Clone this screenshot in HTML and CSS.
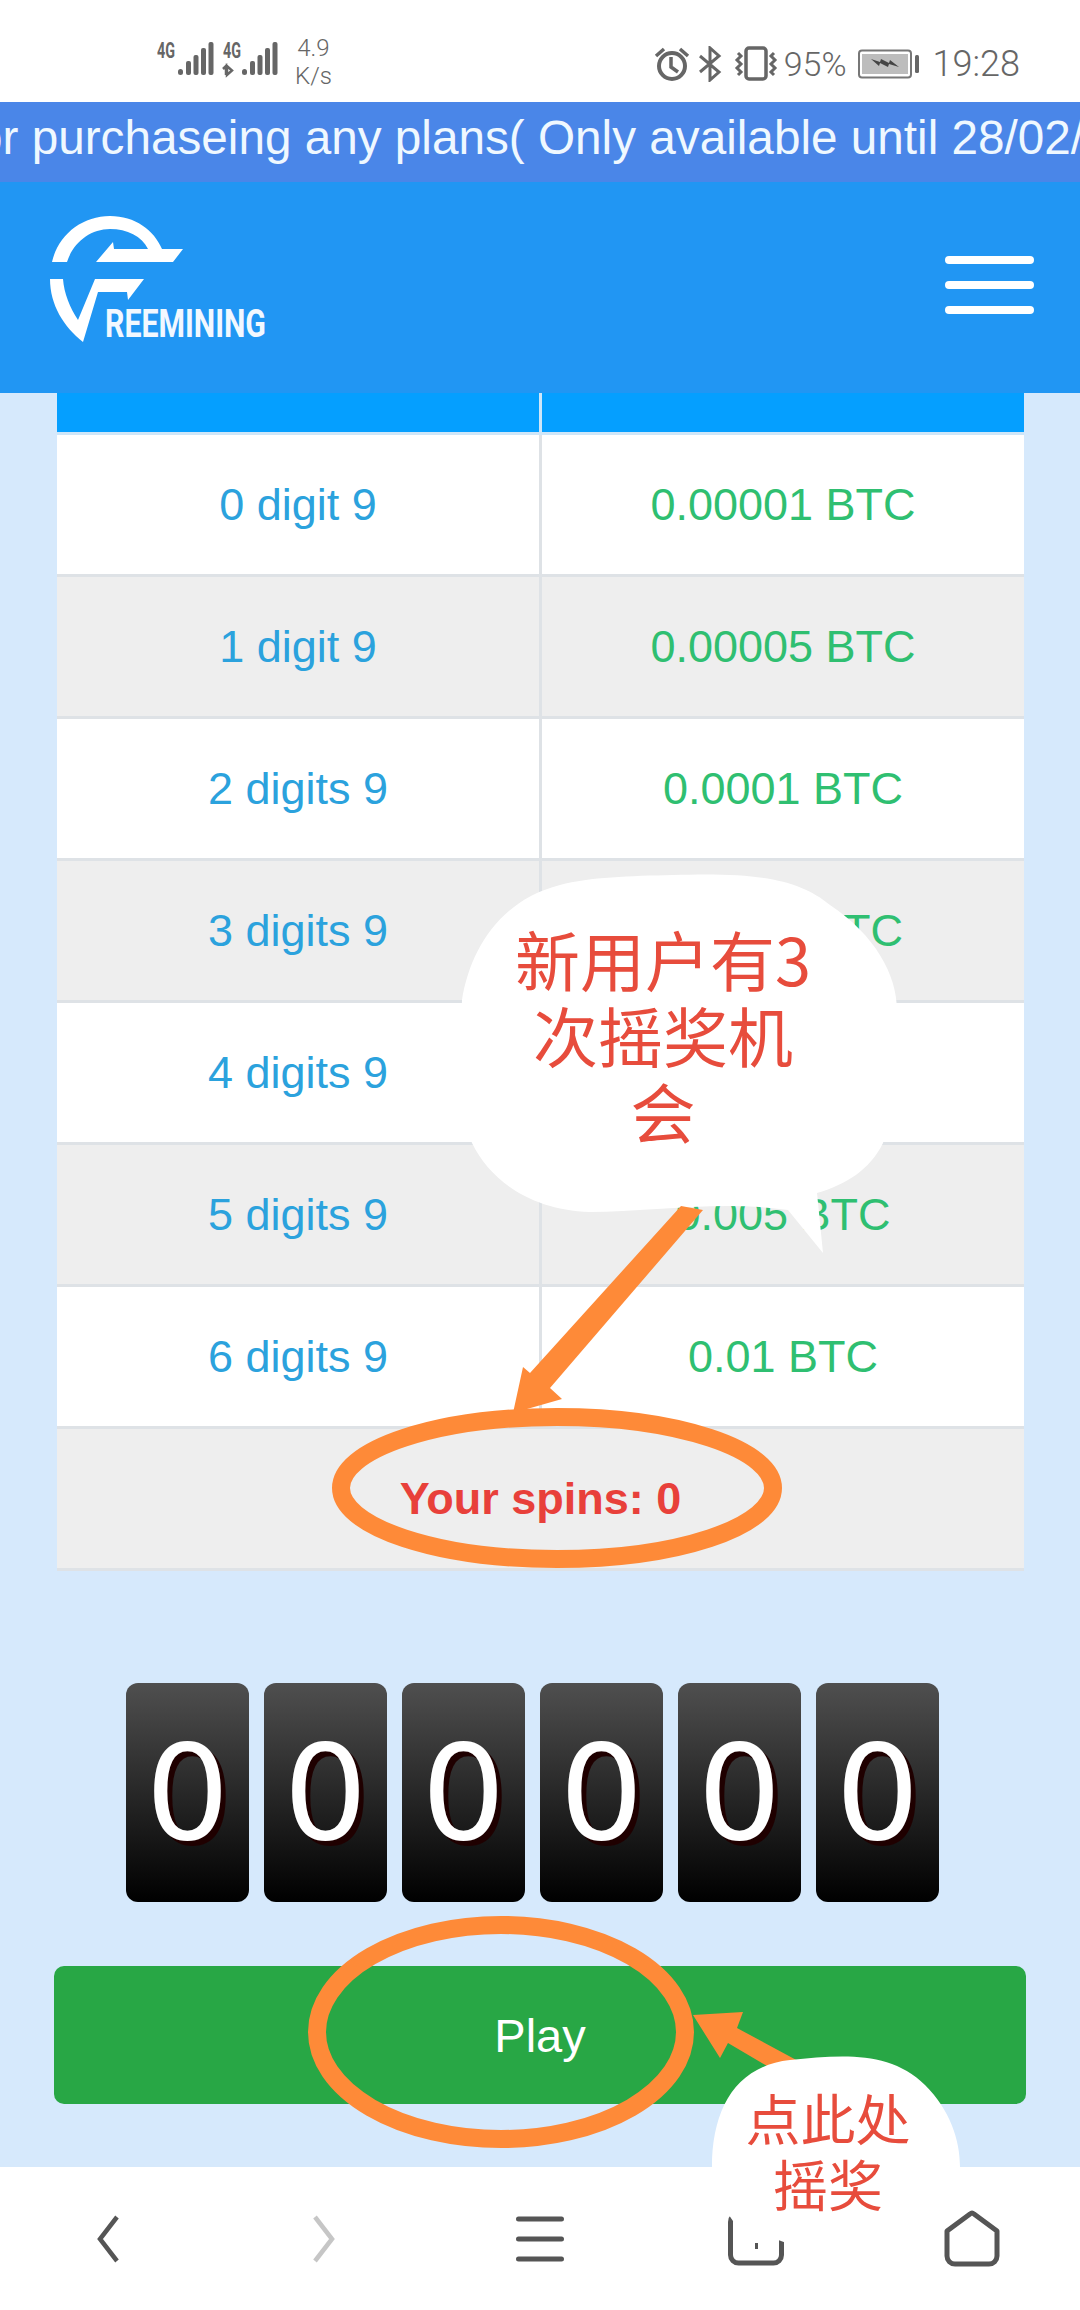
FILE: index.html
```html
<!DOCTYPE html>
<html lang="en">
<head>
    <meta charset="UTF-8">
    <meta name="viewport" content="width=device-width, initial-scale=1.0">
    <title>Freemining Spin</title>
    <link rel="stylesheet" href="styles.css">
</head>
<body>
    <!-- Status bar -->
    <div class="status-bar">
        <div class="status-left">
            <svg class="signal" width="130" height="40" viewBox="0 0 130 40">
                <text x="0" y="16" class="signal-text" textLength="18" lengthAdjust="spacingAndGlyphs">4G</text>
                <g class="bars">
                    <rect x="21" y="27" width="5" height="6" rx="2.5"/>
                    <rect x="29" y="19" width="5" height="14" rx="2"/>
                    <rect x="36.500" y="13" width="5" height="20" rx="2"/>
                    <rect x="44" y="6" width="5" height="27" rx="2"/>
                    <rect x="51.500" y="0" width="5" height="33" rx="2"/>
                </g>
                <text x="66" y="16" class="signal-text" textLength="18" lengthAdjust="spacingAndGlyphs">4G</text>
                <path class="updown" d="M66 27l3-3v9M70 33v-9l5 4.500-5 4.500z"/>
                <g class="bars">
                    <rect x="85" y="27" width="5" height="6" rx="2.500"/>
                    <rect x="93" y="19" width="5" height="14" rx="2"/>
                    <rect x="100.500" y="13" width="5" height="20" rx="2"/>
                    <rect x="108" y="6" width="5" height="27" rx="2"/>
                    <rect x="115.500" y="0" width="5" height="33" rx="2"/>
                </g>
            </svg>
            <div class="net-speed">4.9<br>K/s</div>
        </div>
        <div class="status-right">
            <svg width="38" height="38" viewBox="0 0 38 38" class="alarm-icon">
                <circle cx="19" cy="21" r="13" fill="none" stroke="#666" stroke-width="4"/>
                <path d="M18 12v10l7 5" fill="none" stroke="#666" stroke-width="3.500"/>
                <path d="M3 11l8-7M35 11l-8-7" fill="none" stroke="#666" stroke-width="3.500"/>
            </svg>
            <svg width="24" height="36" viewBox="0 0 24 36" class="bluetooth-icon">
                <path d="M2 10l19 16-9 8V2l9 8L2 26" fill="none" stroke="#666" stroke-width="3"/>
            </svg>
            <svg width="48" height="36" viewBox="0 0 48 36" class="vibrate-icon">
                <rect x="13" y="2" width="20" height="31" rx="3" fill="none" stroke="#666" stroke-width="3.500"/>
                <path d="M5 7l3 3-4 4 4 4-4 4 4 4-3 3M41 7l-3 3 4 4-4 4 4 4-4 4 3 3" fill="none" stroke="#666" stroke-width="3"/>
            </svg>
            <span class="battery-pct">95%</span>
            <svg width="62" height="30" viewBox="0 0 62 30" class="battery">
                <rect x="1" y="1.500" width="52" height="27" rx="3" fill="none" stroke="#777" stroke-width="2"/>
                <rect x="4" y="5" width="46" height="20" fill="#bdbdbd"/>
                <path d="M13 10l9 3 1-3 8 4 1-3 9 7-10-3-1 3-8-4-1 3z" fill="#444"/>
                <rect x="57" y="6" width="4" height="18" rx="1.500" fill="#666"/>
            </svg>
            <span class="clock">19:28</span>
        </div>
    </div>

    <!-- Scrolling notice -->
    <div class="notice">
        <div class="notice-text">or purchaseing any plans( Only available until 28/02/</div>
    </div>

    <!-- Header -->
    <div class="header">
        <svg class="logo" width="240" height="150" viewBox="0 0 240 150">
            <g fill="#fff" transform="translate(-40 -200)">
                <path d="M52 262C58 235 82 216 110 216C135 216 154 230 162 249H183L173 262H96L113 242L114 249H148C142 236 127 229 110 229C90 229 73 243 67 262Z"/>
                <path d="M50 279H63C64 293 70 308 78 320L95 279H144L128 300L127 292H98L83 342C64 327 50 305 50 279Z"/>
            </g>
            <text x="65" y="137" class="logo-text" textLength="161" lengthAdjust="spacingAndGlyphs">REEMINING</text>
        </svg>
        <div class="menu-btn">
            <span></span>
            <span></span>
            <span></span>
        </div>
    </div>

    <!-- Main content -->
    <div class="content">
        <table class="prize-table">
            <thead>
                <tr><th></th><th></th></tr>
            </thead>
            <tbody>
                <tr><td class="digits">0 digit 9</td><td class="prize">0.00001 BTC</td></tr>
                <tr><td class="digits">1 digit 9</td><td class="prize">0.00005 BTC</td></tr>
                <tr><td class="digits">2 digits 9</td><td class="prize">0.0001 BTC</td></tr>
                <tr><td class="digits">3 digits 9</td><td class="prize">0.0005 BTC</td></tr>
                <tr><td class="digits">4 digits 9</td><td class="prize">0.001 BTC</td></tr>
                <tr><td class="digits">5 digits 9</td><td class="prize">0.005 BTC</td></tr>
                <tr><td class="digits">6 digits 9</td><td class="prize">0.01 BTC</td></tr>
                <tr><td class="spins" colspan="2">Your spins: 0</td></tr>
            </tbody>
        </table>

        <div class="counter">
            <div class="counter-digit">0</div>
            <div class="counter-digit">0</div>
            <div class="counter-digit">0</div>
            <div class="counter-digit">0</div>
            <div class="counter-digit">0</div>
            <div class="counter-digit">0</div>
        </div>

        <button class="play-button">Play</button>
    </div>

    <!-- Browser toolbar -->
    <div class="toolbar">
        <svg width="24" height="50" viewBox="0 0 24 50">
            <path d="M21 3L4 25l17 22" fill="none" stroke="#555" stroke-width="4.500"/>
        </svg>
        <svg width="24" height="50" viewBox="0 0 24 50">
            <path d="M3 3l17 22L3 47" fill="none" stroke="#c6c6c6" stroke-width="4.500"/>
        </svg>
        <svg width="48" height="50" viewBox="0 0 48 50">
            <path d="M2.500 5h43M2.500 25h43M2.500 45h43" fill="none" stroke="#555" stroke-width="5" stroke-linecap="round"/>
        </svg>
        <svg width="56" height="56" viewBox="0 0 56 56">
            <rect x="2.500" y="3" width="51" height="49" rx="8" fill="none" stroke="#555" stroke-width="5"/>
            <rect x="27" y="32" width="3" height="6" fill="#555"/>
        </svg>
        <svg width="60" height="60" viewBox="0 0 60 60">
            <path d="M5 22L28 5a3 3 0 0 1 4 0L55 22V47a8 8 0 0 1-8 8H13a8 8 0 0 1-8-8Z" fill="none" stroke="#555" stroke-width="5" stroke-linejoin="round"/>
        </svg>
    </div>

    <!-- Annotations drawn over the screenshot -->
    <svg class="annotations" width="1080" height="2310" viewBox="0 0 1080 2310">
        <path fill="#fff" d="M673 875C760 872 800 880 830 905C875 935 897 975 897 1010C897 1060 900 1100 883 1143C870 1170 845 1185 817 1193L823 1253L788 1210C720 1200 650 1212 590 1212C530 1210 490 1180 472 1143C460 1110 460 1050 462 1000C470 950 500 900 560 885C590 877 630 876 673 875Z"/>
        <g fill="#fe8a38">
            <path d="M530 1373L681 1206L703 1210L550 1388L562 1399L513 1413L523 1367Z"/>
            <path d="M693 2015L743 2012L737 2028L800 2062L767 2066L728 2043L720 2058Z"/>
        </g>
        <g fill="none" stroke="#fe8a38" stroke-width="18">
            <ellipse cx="557" cy="1488" rx="216" ry="71"/>
            <ellipse cx="501" cy="2032" rx="184" ry="107"/>
        </g>
        <path fill="#fff" d="M712 2167C712 2110 735 2066 790 2060C840 2055 890 2050 925 2085C950 2110 960 2140 960 2167C960 2185 945 2200 925 2206L800 2248L735 2224L712 2190Z"/>
    </svg>
    <div class="callout callout-chances">新用户有3<br>次摇奖机<br>会</div>
    <div class="callout callout-tap">点此处<br>摇奖</div>
</body>
</html>
```

FILE: styles.css
```css
/* Page */
* {
    box-sizing: border-box;
}

body {
    position: relative;
    display: flex;
    flex-direction: column;
    width: 1080px;
    height: 2310px;
    margin: 0;
    overflow: hidden;
    background-color: #fff;
    font-family: "Liberation Sans", Arial, sans-serif;
}

/* Status bar */
.status-bar {
    display: flex;
    justify-content: space-between;
    align-items: center;
    height: 102px;
    padding: 22px 60px 0 157px;
    color: #666;
}

.status-left,
.status-right {
    display: flex;
    align-items: center;
}

.signal-text {
    font-family: "Roboto", sans-serif;
    font-size: 22px;
    font-weight: 700;
    fill: #666;
}

.bars {
    fill: #666;
}

.updown {
    fill: none;
    stroke: #666;
    stroke-width: 2.500;
}

.net-speed {
    margin-left: 8px;
    font-family: "Roboto", sans-serif;
    font-size: 24px;
    font-weight: 300;
    line-height: 28px;
    text-align: center;
}

.status-right {
    margin-top: 4px;
}

.alarm-icon {
    margin-right: 7px;
}

.bluetooth-icon {
    margin-right: 11px;
}

.vibrate-icon {
    margin-right: 3px;
}

.battery-pct {
    font-family: "Roboto", sans-serif;
    font-size: 34px;
    font-weight: 300;
}

.battery {
    margin-left: 11px;
}

.clock {
    margin-left: 13px;
    font-family: "Roboto", sans-serif;
    font-size: 36px;
    font-weight: 300;
}

/* Notice */
.notice {
    height: 80px;
    overflow: hidden;
    background-color: #4a86e8;
    color: #eff8ff;
    font-size: 47.700px;
    line-height: 72px;
    white-space: nowrap;
}

.notice-text {
    margin-left: -24px;
}

/* Header */
.header {
    display: flex;
    justify-content: space-between;
    align-items: center;
    height: 211px;
    padding: 0 46px 0 10px;
    background-color: #2196f3;
}

.logo {
    margin: -25px 0 0 30px;
}

.logo-text {
    font-family: "Roboto", sans-serif;
    font-size: 39px;
    font-weight: 700;
    fill: #f2f8ff;
}

.menu-btn {
    display: flex;
    flex-direction: column;
    gap: 17px;
    width: 89px;
    margin-top: -6px;
}

.menu-btn span {
    height: 8px;
    border-radius: 4px;
    background-color: #fff;
}

/* Main content */
.content {
    display: flex;
    flex-direction: column;
    align-items: center;
    flex: 1;
    background-color: #d6e9fc;
}

.prize-table {
    width: 967px;
    height: 1177px;
    margin-left: 1px;
    border-collapse: separate;
    border-spacing: 0;
    table-layout: fixed;
    font-size: 45px;
    text-align: center;
}

.prize-table th {
    height: 42px;
    border-bottom: 3px solid #cfe6f8;
    background-color: #059fff;
}

.prize-table th:first-child {
    width: 485px;
    border-right: 3px solid #cfe6f8;
}

.prize-table td {
    height: 142px;
    border-bottom: 3px solid #dee2e6;
    background-color: #fff;
}

.prize-table td:first-child {
    border-right: 3px solid #dee2e6;
}

.prize-table tbody tr:nth-child(even) td {
    background-color: #eee;
}

.digits {
    color: #2ba2dd;
}

.prize {
    color: #2fbf71;
}

.prize-table td.spins {
    border-right: none;
    color: #e8403a;
    font-weight: 700;
}

.counter {
    display: flex;
    margin-top: 112px;
}

.counter-digit {
    width: 123px;
    height: 219px;
    margin-right: 15px;
    border-radius: 12px;
    background: linear-gradient(#4f4f4f, #000);
    color: #fff;
    font-family: "DejaVu Sans", sans-serif;
    font-size: 132px;
    line-height: 221px;
    text-align: center;
    text-shadow: 5px 5px 0 #1f0000;
}

.play-button {
    width: 972px;
    height: 138px;
    margin-top: 64px;
    border: none;
    border-radius: 10px;
    background-color: #28a745;
    color: #fff;
    font-family: "Liberation Sans", Arial, sans-serif;
    font-size: 47px;
}

/* Browser toolbar */
.toolbar {
    display: flex;
    align-items: center;
    height: 143px;
    background-color: #fff;
}

.toolbar svg:nth-child(1) {
    margin-left: 96px;
}

.toolbar svg:nth-child(2) {
    margin-left: 192px;
}

.toolbar svg:nth-child(3) {
    margin-left: 180px;
}

.toolbar svg:nth-child(4) {
    margin-left: 164px;
}

.toolbar svg:nth-child(5) {
    margin-left: 158px;
}

/* Annotations */
.annotations {
    position: absolute;
    top: 0;
    left: 0;
}

.callout {
    position: absolute;
    color: #e74c3c;
    font-family: "Noto Sans CJK SC", sans-serif;
    text-align: center;
}

.callout-chances {
    top: 920px;
    left: 463px;
    width: 400px;
    font-size: 65px;
    line-height: 76px;
}

.callout-tap {
    top: 2083px;
    left: 728px;
    width: 200px;
    font-size: 55px;
    line-height: 66px;
}
```
